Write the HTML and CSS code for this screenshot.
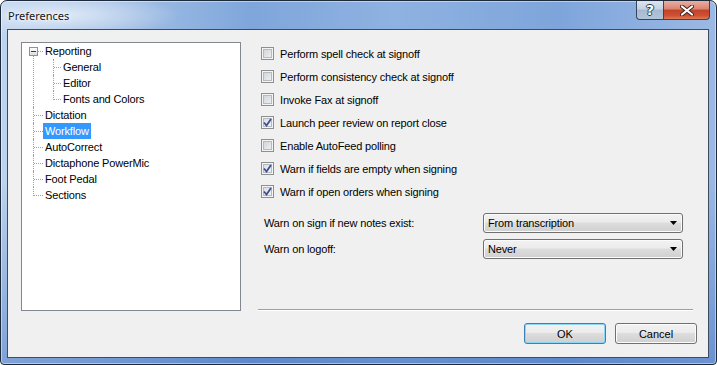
FILE: index.html
```html
<!DOCTYPE html>
<html lang="en">
<head>
<meta charset="UTF-8" />
<title>Preferences</title>
<link rel="stylesheet" href="styles.css">
</head>
<body>

<div class="window">
  <div class="titlebar">
    <span class="title">Preferences</span>
    <div class="caption">
      <button class="cap help">?</button>
      <button class="cap close">
        <svg width="14" height="11" viewBox="0 0 14 11">
          <path d="M2 1.5 L12 9.5 M12 1.5 L2 9.5" stroke="#3a2420" stroke-width="4" stroke-linecap="round" />
          <path d="M2 1.5 L12 9.5 M12 1.5 L2 9.5" stroke="#fff" stroke-width="2.2" stroke-linecap="round" />
        </svg>
      </button>
    </div>
  </div>

  <div class="client">
    <div class="content">
      <div class="tree">
        <ul>
          <li class="open">
            <span class="expander"></span><span class="label">Reporting</span>
            <ul>
              <li><span class="label">General</span></li>
              <li><span class="label">Editor</span></li>
              <li><span class="label">Fonts and Colors</span></li>
            </ul>
          </li>
          <li><span class="label">Dictation</span></li>
          <li class="selected"><span class="label">Workflow</span></li>
          <li><span class="label">AutoCorrect</span></li>
          <li><span class="label">Dictaphone PowerMic</span></li>
          <li><span class="label">Foot Pedal</span></li>
          <li><span class="label">Sections</span></li>
        </ul>
      </div>

      <div class="options">
        <ul class="checks">
          <li><span class="check"></span>Perform spell check at signoff</li>
          <li><span class="check"></span>Perform consistency check at signoff</li>
          <li><span class="check"></span>Invoke Fax at signoff</li>
          <li><span class="check on"><svg width="9" height="9" viewBox="0 0 9 9"><path d="M1 4.5 L3.5 7.5 L8 1" fill="none" stroke="#3d508f" stroke-width="1.8" /></svg></span>Launch peer review on report close</li>
          <li><span class="check"></span>Enable AutoFeed polling</li>
          <li><span class="check on"><svg width="9" height="9" viewBox="0 0 9 9"><path d="M1 4.5 L3.5 7.5 L8 1" fill="none" stroke="#3d508f" stroke-width="1.8" /></svg></span>Warn if fields are empty when signing</li>
          <li><span class="check on"><svg width="9" height="9" viewBox="0 0 9 9"><path d="M1 4.5 L3.5 7.5 L8 1" fill="none" stroke="#3d508f" stroke-width="1.8" /></svg></span>Warn if open orders when signing</li>
        </ul>

        <div class="fields">
          <label>Warn on sign if new notes exist:</label>
          <div class="combo"><span>From transcription</span><svg width="7" height="4" viewBox="0 0 7 4"><path d="M0 0 H7 L3.5 4 Z" fill="#000" /></svg></div>
          <label>Warn on logoff:</label>
          <div class="combo"><span>Never</span><svg width="7" height="4" viewBox="0 0 7 4"><path d="M0 0 H7 L3.5 4 Z" fill="#000" /></svg></div>
        </div>

        <div class="separator"></div>
      </div>
    </div>

    <div class="buttons">
      <button class="btn default">OK</button>
      <button class="btn">Cancel</button>
    </div>
  </div>
</div>

</body>
</html>
```

FILE: styles.css
```css
* { box-sizing: border-box; }
body { margin: 0; font-family: "Liberation Sans", Arial, sans-serif; font-size: 11px; letter-spacing: -0.15px; color: #000; background: #fff; }

/* Window frame */
.window {
  width: 717px; height: 365px; display: flex; flex-direction: column;
  border: 1px solid #1d2a3b; border-radius: 7px 7px 4px 4px; overflow: hidden;
  box-shadow: inset 0 0 0 1px rgba(255,255,255,0.45);
  background:
    radial-gradient(ellipse 120px 22px at 60px 14px, rgba(255,255,255,0.6), rgba(255,255,255,0)),
    linear-gradient(to bottom, rgba(0,0,0,0) 0, rgba(0,0,0,0) 50%, rgba(50,100,185,0.45) 100%),
    linear-gradient(to right, #bdd3ee 0%, #a6c2e7 15%, #7fa6db 35%, #8eb2e1 55%, #7ea5db 78%, #9bb9e4 100%);
}
.titlebar { height: 28px; display: flex; flex-shrink: 0; }
.title {
  padding: 7px 0 0 7px; font-family: "Noto Sans", "DejaVu Sans", sans-serif; font-size: 11px;
  letter-spacing: 0; color: #151515; text-shadow: 0 0 6px #fff, 0 0 3px #fff;
}
.caption { margin-left: auto; margin-right: 6px; display: flex; align-self: flex-start; }
.cap {
  height: 19px; padding: 0; border: 1px solid #34465e; border-top: none;
  display: flex; align-items: center; justify-content: center;
}
.help {
  width: 28px; border-radius: 0 0 0 4px;
  background: linear-gradient(#dce5f0, #c4d2e3 45%, #a6b9d1 50%, #b3c5da 100%);
  color: #fff; font: bold 14px "DejaVu Sans", sans-serif;
  text-shadow: 1px 0 #2e3b4e, -1px 0 #2e3b4e, 0 1px #2e3b4e, 0 -1px #2e3b4e;
}
.close {
  width: 47px; margin-left: -1px; border-radius: 0 0 4px 0;
  background: linear-gradient(#eab0a3, #d98370 45%, #c3432a 50%, #cf4f34 80%, #e07a55 100%);
}

/* Client area */
.client {
  flex: 1; margin: 0 7px 6px 6px; border: 1px solid #3e4c60; background: #f0f0f0;
  display: flex; flex-direction: column;
}
.content { display: flex; padding: 12px 0 0 13px; }

/* Tree view */
.tree { width: 220px; height: 269px; border: 1px solid #828790; background: #fff; }
.tree ul { list-style: none; margin: 0; padding: 0; }
.tree li { position: relative; padding-left: 21px; }
.tree li::before {
  content: ''; position: absolute; left: 11px; top: 0; bottom: 0; border-left: 1px dotted #a0a0a0;
}
.tree li:last-child::before { bottom: auto; height: 9px; }
.tree li::after {
  content: ''; position: absolute; left: 12px; top: 8px; width: 9px; border-top: 1px dotted #a0a0a0;
}
.tree li.open::before { top: 13px; }
.tree li.open::after { left: 16px; width: 5px; }
.tree li ul { margin-left: -1px; }
.tree li li { padding-left: 19px; }
.tree li li::after { width: 7px; }
.tree .label { display: inline-block; height: 16px; line-height: 16px; padding: 0 2px; }
.tree .selected > .label { background: #3399ff; color: #fff; }
.expander {
  position: absolute; left: 7px; top: 4px; width: 9px; height: 9px; z-index: 1;
  border: 1px solid #919191; background: linear-gradient(#fff, #dcdcdc);
}
.expander::after {
  content: ''; position: absolute; left: 1px; top: 3px; width: 5px; height: 1px; background: #1e3f7a;
}

/* Options */
.options { width: 435px; margin-left: 17px; display: flex; flex-direction: column; }
.checks { list-style: none; margin: 0; padding: 0; }
.checks li { height: 23px; display: flex; align-items: center; padding-left: 3px; }
.check {
  width: 13px; height: 13px; margin-right: 6px; border: 1px solid #8e8f8f;
  display: flex; align-items: center; justify-content: center;
  background: linear-gradient(135deg, #cbcfd4, #f4f5f6);
  box-shadow: inset 0 0 0 1px #f4f4f4, inset 0 0 0 2px #b6babf;
}
.check.on { background: linear-gradient(135deg, #d6d9de, #f7f7f8); }

.fields {
  display: grid; grid-template-columns: 225px 200px; row-gap: 6px; align-items: center; margin-top: 10px;
}
.fields label { padding-left: 6px; }
.combo {
  height: 20px; padding: 0 5px 0 4px; border: 1px solid #707070; border-radius: 3px;
  display: flex; align-items: center; justify-content: space-between;
  background: linear-gradient(#f2f2f2 0%, #ebebeb 45%, #dddddd 50%, #cfcfcf 100%);
  box-shadow: inset 0 0 0 1px #fbfbfb;
}
.separator { margin-top: auto; border-top: 1px solid #a0a0a0; border-bottom: 1px solid #fff; }

/* Dialog buttons */
.buttons { display: flex; justify-content: flex-end; gap: 9px; padding: 12px 11px 0 0; }
.btn {
  width: 82px; height: 21px; padding: 0; font: inherit; color: #000;
  border: 1px solid #707070; border-radius: 3px;
  background: linear-gradient(#f2f2f2 0%, #ebebeb 45%, #dddddd 50%, #cfcfcf 100%);
  box-shadow: inset 0 0 0 1px #fcfcfc;
}
.btn.default { border-color: #3c7fb1; box-shadow: inset 0 0 0 1px #8ad7f7; }
```
